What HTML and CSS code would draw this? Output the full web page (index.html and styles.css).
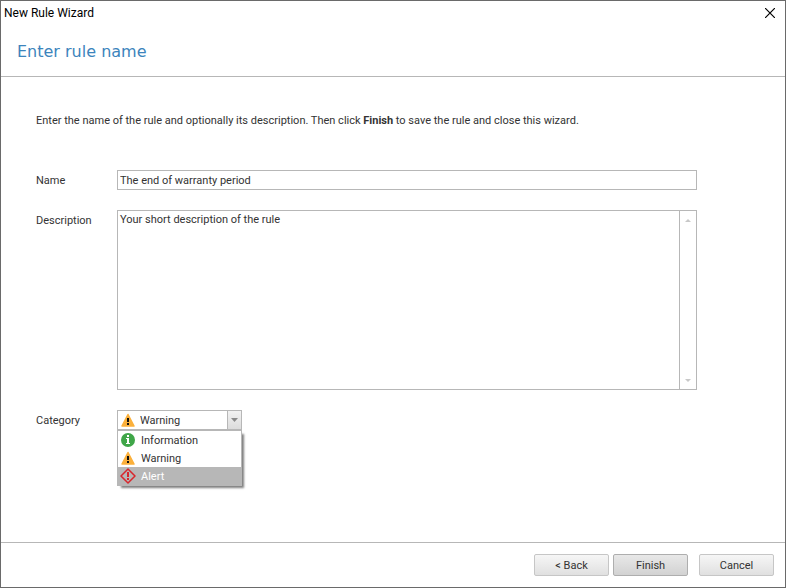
FILE: index.html
```html
<!DOCTYPE html>
<html lang="en">
<head>
<meta charset="UTF-8" />
<meta name="viewport" content="width=device-width, initial-scale=1" />
<title>New Rule Wizard</title>
<link rel="stylesheet" href="styles.css">
</head>
<body>

<!-- Icons shared by the category box and its list -->
<svg class="sprite" aria-hidden="true">
  <symbol id="icon-info" viewBox="0 0 16 16">
    <circle cx="8" cy="8" r="7" fill="#3fa648" />
    <path d="M7 3h2v2H7zM6 6h3v5h1v1H6v-1h1V7H6z" fill="#fff" />
  </symbol>
  <symbol id="icon-warning" viewBox="0 0 16 16">
    <path d="M8 2.500L14 14H2z" fill="#fbb03b" stroke="#fbb03b" stroke-width="1.500" stroke-linejoin="round" />
    <path d="M7 6h2v4H7zM7 11h2v2H7z" fill="#111" />
  </symbol>
  <symbol id="icon-alert" viewBox="0 0 16 16">
    <path d="M8 1L15 8L8 15L1 8z" fill="none" stroke="#d8262c" stroke-width="1.500" stroke-linejoin="round" />
    <path d="M7 4h2v5H7zM7 10h2v2H7z" fill="#d8262c" />
  </symbol>
</svg>

<form class="wizard">

  <header class="wizard-header">
    <div class="title-bar">
      <span>New Rule Wizard</span>
      <button type="button" class="close" aria-label="Close">
        <svg width="10" height="10" viewBox="0 0 10 10"><path d="M0 0l10 10M10 0L0 10" stroke="#000" stroke-width="1.200" fill="none" /></svg>
      </button>
    </div>
    <h1>Enter rule name</h1>
  </header>

  <main class="wizard-body">
    <p class="intro">Enter the name of the rule and optionally its description. Then click <b>Finish</b> to save the rule and close this wizard.</p>

    <div class="fields">
      <label for="name">Name</label>
      <input type="text" id="name" class="box" value="The end of warranty period" />

      <label for="description">Description</label>
      <div class="box memo">
        <textarea id="description">Your short description of the rule</textarea>
        <div class="scrollbar">
          <button type="button" aria-label="Scroll up"><svg width="6" height="3" viewBox="0 0 6 3"><path d="M0 3L3 0L6 3z" fill="#c8c8c8" /></svg></button>
          <button type="button" aria-label="Scroll down"><svg width="6" height="3" viewBox="0 0 6 3"><path d="M0 0L3 3L6 0z" fill="#c8c8c8" /></svg></button>
        </div>
      </div>

      <label for="category">Category</label>
      <div class="combo">
        <div class="box combo-box">
          <svg class="icon"><use href="#icon-warning" /></svg>
          <select id="category">
            <option>Information</option>
            <option selected>Warning</option>
            <option>Alert</option>
          </select>
          <span class="combo-arrow"><svg width="7" height="4" viewBox="0 0 7 4"><path d="M0 0h7L3.500 4z" fill="#8a8a8a" /></svg></span>
        </div>
        <ul class="combo-list" role="listbox" aria-label="Category">
          <li role="option"><svg class="icon"><use href="#icon-info" /></svg>Information</li>
          <li role="option"><svg class="icon"><use href="#icon-warning" /></svg>Warning</li>
          <li role="option" class="selected" aria-selected="true"><svg class="icon"><use href="#icon-alert" /></svg>Alert</li>
        </ul>
      </div>
    </div>
  </main>

  <footer class="wizard-footer">
    <div class="nav">
      <button type="button" class="btn">&lt; Back</button>
      <button type="submit" class="btn btn-default">Finish</button>
    </div>
    <button type="button" class="btn">Cancel</button>
  </footer>

</form>

</body>
</html>
```
FILE: styles.css
```css
* {
  box-sizing: border-box;
}
body {
  margin: 0;
  font-family: Tahoma, Roboto, sans-serif;
  font-size: 11px;
  line-height: 15px;
  color: #333;
  background-color: #fff;
}
button, input, textarea, select {
  font: inherit;
  color: inherit;
  margin: 0;
}
.sprite {
  display: none;
}
.wizard {
  min-height: 100vh;
  display: flex;
  flex-direction: column;
  border: 1px solid #6a6a6a;
}
/* Header */
.wizard-header {
  border-bottom: 1px solid #b7b7b7;
}
.title-bar {
  display: flex;
  justify-content: space-between;
  align-items: center;
  height: 24px;
  padding: 0 3px;
  font-family: "Segoe UI", Roboto, sans-serif;
  font-size: 12px;
  color: #000;
}
.close {
  display: flex;
  align-items: center;
  justify-content: center;
  width: 24px;
  height: 24px;
  padding: 0;
  border: none;
  background: none;
}
h1 {
  margin: 0;
  padding: 17px 16px 14px;
  font-family: Verdana, "DejaVu Sans", sans-serif;
  font-size: 16px;
  line-height: 20px;
  font-weight: normal;
  color: #3c84bc;
}
/* Body */
.wizard-body {
  flex: 1;
  padding: 36px 88px 36px 35px;
}
.intro {
  margin: 0 0 42px;
}
.fields {
  display: grid;
  grid-template-columns: 81px 1fr;
  row-gap: 20px;
}
.fields label {
  padding-top: 3px;
}
.box {
  border: 1px solid #b7b7b7;
  border-radius: 0;
  background-color: #fff;
}
input.box {
  width: 100%;
  height: 20px;
  padding: 0 2px;
}
.memo {
  display: flex;
  height: 180px;
}
.memo textarea {
  flex: 1;
  padding: 1px 2px;
  border: none;
  resize: none;
  overflow: hidden;
}
.scrollbar {
  display: flex;
  flex-direction: column;
  justify-content: space-between;
  width: 17px;
  border-left: 1px solid #b7b7b7;
}
.scrollbar button {
  display: flex;
  align-items: center;
  justify-content: center;
  height: 18px;
  padding: 0;
  border: none;
  background: none;
}
/* Category */
.combo {
  position: relative;
  width: 125px;
}
.combo-box {
  display: flex;
  align-items: center;
  height: 20px;
  padding-left: 2px;
}
.icon {
  flex: none;
  width: 16px;
  height: 16px;
}
.combo-box select {
  flex: 1;
  min-width: 0;
  padding: 0 0 0 4px;
  border: none;
  background: none;
  appearance: none;
}
.combo-arrow {
  display: flex;
  align-items: center;
  justify-content: center;
  width: 14px;
  height: 18px;
  border-left: 1px solid #b7b7b7;
  background: linear-gradient(#f2f2f2, #dcdcdc);
  pointer-events: none;
}
.combo-list {
  position: absolute;
  top: 100%;
  left: 0;
  width: 100%;
  margin: 0;
  padding: 0;
  list-style: none;
  border: 1px solid #b7b7b7;
  background-color: #fff;
  box-shadow: 3px 3px 2px -1px rgba(0, 0, 0, 0.5);
}
.combo-list li {
  display: flex;
  align-items: center;
  gap: 5px;
  height: 18px;
  padding-left: 2px;
}
.combo-list .selected {
  background-color: #b7b7b7;
  color: #fff;
}
/* Footer */
.wizard-footer {
  display: flex;
  justify-content: flex-end;
  gap: 11px;
  padding: 11px;
  border-top: 1px solid #b7b7b7;
}
.nav {
  display: flex;
  gap: 4px;
}
.btn {
  width: 75px;
  height: 22px;
  padding: 0;
  border: 1px solid #c6c6c6;
  border-radius: 2px;
  background: linear-gradient(#f6f6f6, #e0e0e0);
}
.btn-default {
  border-color: #aeaeae;
  background: linear-gradient(#e8e8e8, #d2d2d2);
}
```
